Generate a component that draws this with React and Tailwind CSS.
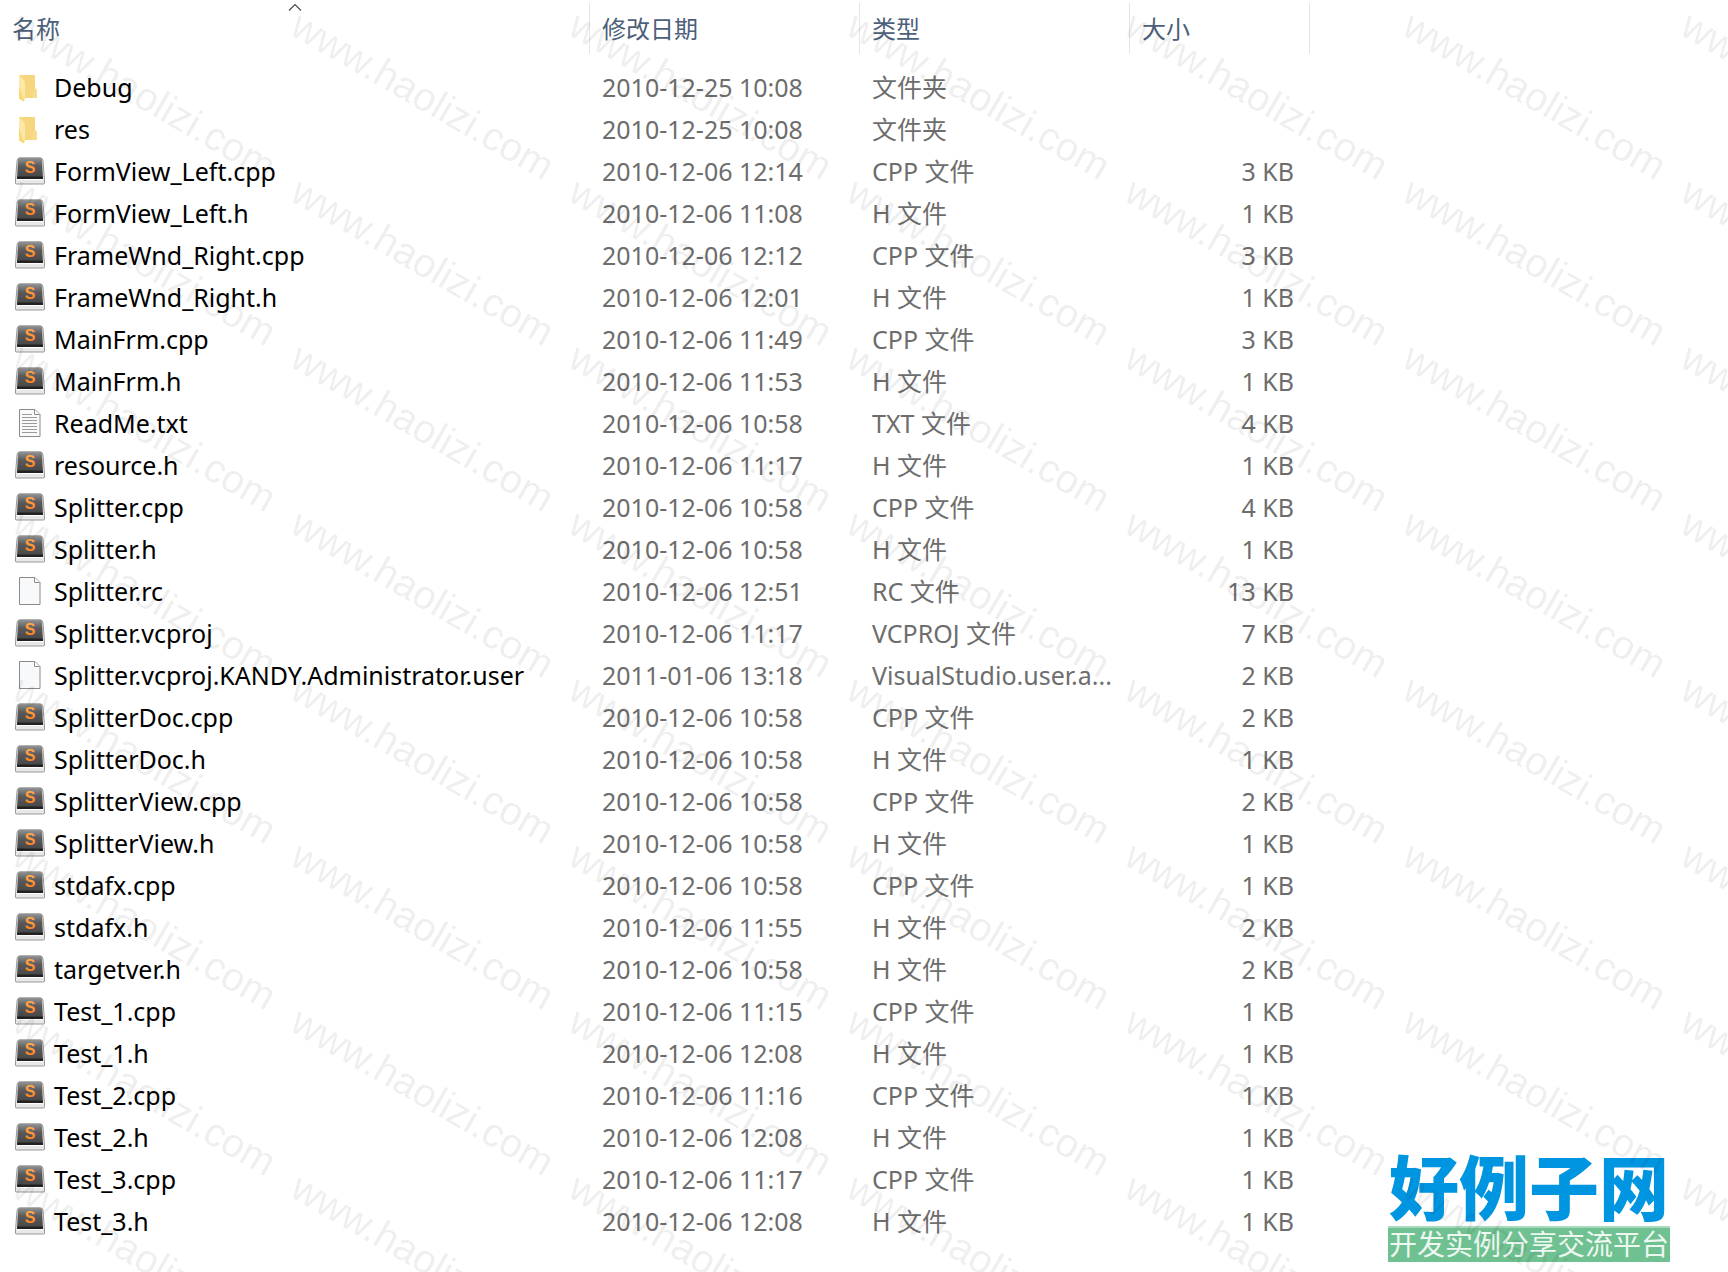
import React from 'react';

const files = [
  { name: 'Debug', date: '2010-12-25 10:08', type: '文件夹', size: '', icon: 'folder' },
  { name: 'res', date: '2010-12-25 10:08', type: '文件夹', size: '', icon: 'folder' },
  { name: 'FormView_Left.cpp', date: '2010-12-06 12:14', type: 'CPP 文件', size: '3 KB', icon: 'code' },
  { name: 'FormView_Left.h', date: '2010-12-06 11:08', type: 'H 文件', size: '1 KB', icon: 'code' },
  { name: 'FrameWnd_Right.cpp', date: '2010-12-06 12:12', type: 'CPP 文件', size: '3 KB', icon: 'code' },
  { name: 'FrameWnd_Right.h', date: '2010-12-06 12:01', type: 'H 文件', size: '1 KB', icon: 'code' },
  { name: 'MainFrm.cpp', date: '2010-12-06 11:49', type: 'CPP 文件', size: '3 KB', icon: 'code' },
  { name: 'MainFrm.h', date: '2010-12-06 11:53', type: 'H 文件', size: '1 KB', icon: 'code' },
  { name: 'ReadMe.txt', date: '2010-12-06 10:58', type: 'TXT 文件', size: '4 KB', icon: 'text' },
  { name: 'resource.h', date: '2010-12-06 11:17', type: 'H 文件', size: '1 KB', icon: 'code' },
  { name: 'Splitter.cpp', date: '2010-12-06 10:58', type: 'CPP 文件', size: '4 KB', icon: 'code' },
  { name: 'Splitter.h', date: '2010-12-06 10:58', type: 'H 文件', size: '1 KB', icon: 'code' },
  { name: 'Splitter.rc', date: '2010-12-06 12:51', type: 'RC 文件', size: '13 KB', icon: 'blank' },
  { name: 'Splitter.vcproj', date: '2010-12-06 11:17', type: 'VCPROJ 文件', size: '7 KB', icon: 'code' },
  { name: 'Splitter.vcproj.KANDY.Administrator.user', date: '2011-01-06 13:18', type: 'VisualStudio.user.a...', size: '2 KB', icon: 'blank' },
  { name: 'SplitterDoc.cpp', date: '2010-12-06 10:58', type: 'CPP 文件', size: '2 KB', icon: 'code' },
  { name: 'SplitterDoc.h', date: '2010-12-06 10:58', type: 'H 文件', size: '1 KB', icon: 'code' },
  { name: 'SplitterView.cpp', date: '2010-12-06 10:58', type: 'CPP 文件', size: '2 KB', icon: 'code' },
  { name: 'SplitterView.h', date: '2010-12-06 10:58', type: 'H 文件', size: '1 KB', icon: 'code' },
  { name: 'stdafx.cpp', date: '2010-12-06 10:58', type: 'CPP 文件', size: '1 KB', icon: 'code' },
  { name: 'stdafx.h', date: '2010-12-06 11:55', type: 'H 文件', size: '2 KB', icon: 'code' },
  { name: 'targetver.h', date: '2010-12-06 10:58', type: 'H 文件', size: '2 KB', icon: 'code' },
  { name: 'Test_1.cpp', date: '2010-12-06 11:15', type: 'CPP 文件', size: '1 KB', icon: 'code' },
  { name: 'Test_1.h', date: '2010-12-06 12:08', type: 'H 文件', size: '1 KB', icon: 'code' },
  { name: 'Test_2.cpp', date: '2010-12-06 11:16', type: 'CPP 文件', size: '1 KB', icon: 'code' },
  { name: 'Test_2.h', date: '2010-12-06 12:08', type: 'H 文件', size: '1 KB', icon: 'code' },
  { name: 'Test_3.cpp', date: '2010-12-06 11:17', type: 'CPP 文件', size: '1 KB', icon: 'code' },
  { name: 'Test_3.h', date: '2010-12-06 12:08', type: 'H 文件', size: '1 KB', icon: 'code' },
];

function FolderIcon() {
  return (
    <svg width="30" height="30" viewBox="0 0 30 30" aria-hidden="true">
      <path d="M4 3h16v13l2 2v8H8z" fill="#f6d67e" />
      <path d="M19 16h1l2 2v8h-5z" fill="#f8dc8e" />
      <path d="M4 3l4 4q2 1.500 2 4v16l-1 2.500-5-3z" fill="#fde8a8" />
      <path d="M4 14v12.500l5 3v-2z" fill="#f9d978" />
    </svg>
  );
}

function CodeIcon() {
  return (
    <svg width="30" height="30" viewBox="0 0 30 30" aria-hidden="true">
      <defs>
        <linearGradient id="keycap" x1="0" y1="0" x2="0" y2="1">
          <stop offset="0" stopColor="#969696" />
          <stop offset="0.4" stopColor="#5a5a5a" />
          <stop offset="1" stopColor="#444" />
        </linearGradient>
        <linearGradient id="letter" x1="0" y1="0" x2="0" y2="1">
          <stop offset="0" stopColor="#ffb052" />
          <stop offset="1" stopColor="#ff7a1c" />
        </linearGradient>
      </defs>
      <path d="M4 2h22q1.500 0 2 3l1.500 19v3q0 1-1 1h-27q-1 0-1-1v-3L2 5q.5-3 2-3z" fill="#e8e8e8" stroke="#999" />
      <path d="M5 1.500h20q1.800 0 2 2.500l1 19H2L3 4q.2-2.500 2-2.500z" fill="url(#keycap)" />
      <path d="M2.200 20.500h25.600l.2 3.200H2z" fill="#222" />
      <path d="M2 23.500h26" stroke="#fff" />
      <text x="15" y="17" textAnchor="middle" fill="url(#letter)" className="font-['Liberation_Sans'] text-[16px] font-bold">S</text>
    </svg>
  );
}

function PageIcon({ lines }) {
  return (
    <svg width="30" height="30" viewBox="0 0 30 30" aria-hidden="true">
      <path d="M4.500 1.500h15.500l5 5v22h-20.500z" fill="#f8f9fa" stroke="#8a8a8a" />
      <path d="M19.500 1.500v5h5" fill="#fff" stroke="#8a8a8a" />
      {lines && <path d="M7 6.500h10M7 9.500h15M7 12.500h15M7 15.500h15M7 18.500h15M7 21.500h15M7 24.500h15" stroke="#9a9a9a" />}
    </svg>
  );
}

function FileIcon({ kind }) {
  if (kind === 'folder') return <FolderIcon />;
  if (kind === 'code') return <CodeIcon />;
  return <PageIcon lines={kind === 'text'} />;
}

function Watermark() {
  return (
    <div aria-hidden="true" className="pointer-events-none absolute inset-0 overflow-hidden">
      <div className="grid grid-cols-[repeat(7,278px)] auto-rows-[166px] pl-5">
        {Array.from({ length: 56 }, (_, i) => (
          <span
            key={i}
            className="origin-top-left rotate-30 whitespace-nowrap pl-2 font-['Liberation_Sans'] text-[40px] leading-10 text-black/8"
          >
            www.haolizi.com
          </span>
        ))}
      </div>
    </div>
  );
}

function SiteLogo() {
  return (
    <div className="absolute right-[58px] bottom-[10px] w-[282px] text-center">
      <div className="pb-1 font-['Noto_Sans_CJK_SC',sans-serif] text-[70px] leading-[74px] font-black whitespace-nowrap text-[#0095e0]">
        好例子网
      </div>
      <div className="border-t-2 border-[#a9d9bb] bg-[#70c191] pb-1 font-['Noto_Sans_CJK_SC',sans-serif] text-[28px] leading-[30px] whitespace-nowrap text-[#eef8f1]">
        开发实例分享交流平台
      </div>
    </div>
  );
}

export default function App() {
  return (
    <div className="relative min-h-screen overflow-hidden bg-white font-['Noto_Sans','Noto_Sans_CJK_SC',sans-serif] text-[25px] leading-[42px] text-[#6d6d6d]">
      <table className="w-[1310px] table-fixed border-collapse text-left whitespace-nowrap">
        <colgroup>
          <col className="w-[590px]" />
          <col className="w-[270px]" />
          <col className="w-[270px]" />
          <col className="w-[180px]" />
        </colgroup>
        <thead className="text-2xl text-[#4c607a]">
          <tr>
            {['名称', '修改日期', '类型', '大小'].map((label, i) => (
              <th key={label} className="p-0 pb-3 font-normal" aria-sort={i === 0 ? 'ascending' : undefined}>
                <div className="relative flex h-[54px] items-end">
                  <button className="h-[51px] w-full border-r border-[#e5e5e5] pl-3 text-left">{label}</button>
                  {i === 0 && (
                    <svg className="absolute top-0 left-1/2 -translate-x-1/2" width="14" height="12" viewBox="0 0 14 12" aria-hidden="true">
                      <path d="M1 10.500l6-6 6 6" fill="none" stroke="#4c4c4c" strokeWidth="1.200" />
                    </svg>
                  )}
                </div>
              </th>
            ))}
          </tr>
        </thead>
        <tbody>
          {files.map((file) => (
            <tr key={file.name} className="h-[42px]">
              <td className="p-0 pl-[15px] text-black">
                <div className="flex items-center gap-[9px]">
                  <FileIcon kind={file.icon} />
                  <span>{file.name}</span>
                </div>
              </td>
              <td className="p-0 pl-3">{file.date}</td>
              <td className="p-0 pl-3">{file.type}</td>
              <td className="p-0 pr-4 text-right">{file.size}</td>
            </tr>
          ))}
        </tbody>
      </table>
      <SiteLogo />
      <Watermark />
    </div>
  );
}
